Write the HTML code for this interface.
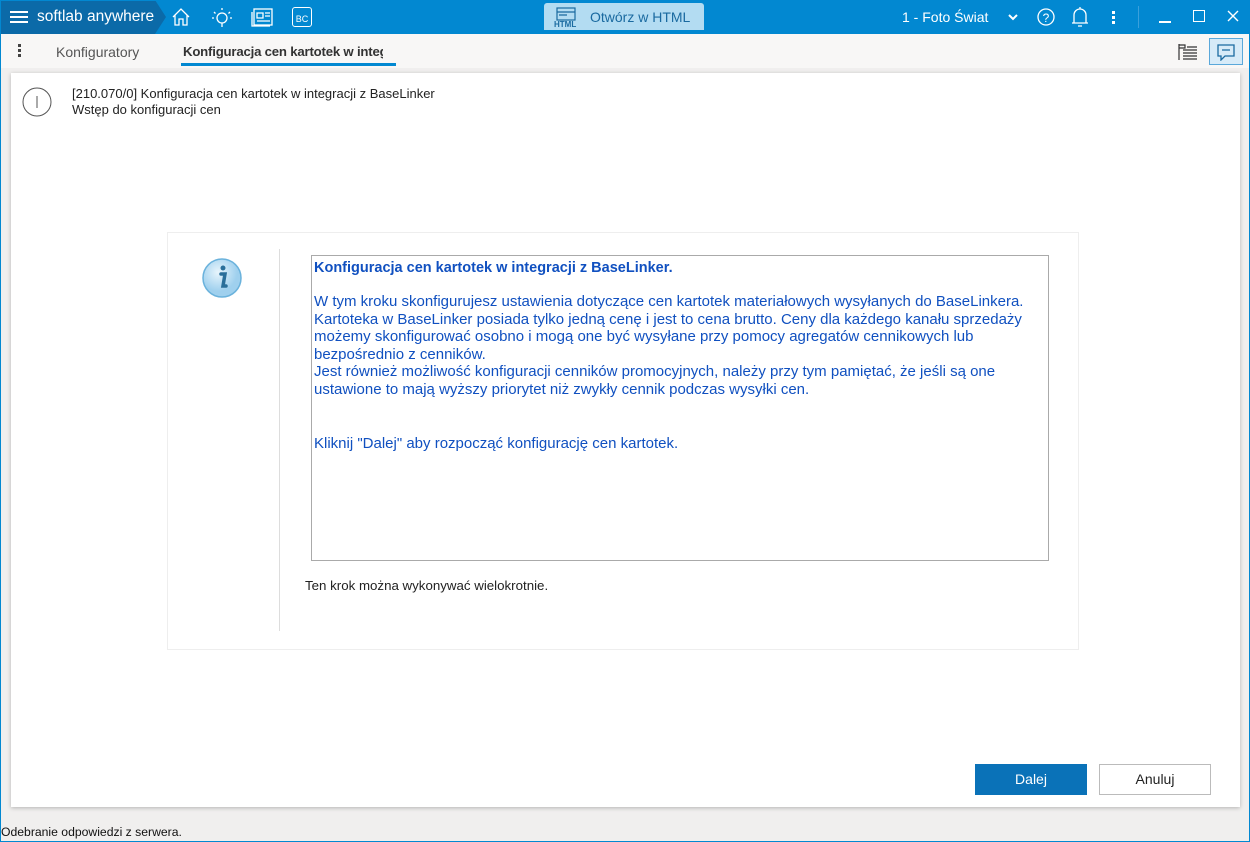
<!DOCTYPE html>
<html><head><meta charset="utf-8"><style>
*{margin:0;padding:0;box-sizing:border-box}
body{width:1250px;height:842px;overflow:hidden;background:#f0efee;font-family:"Liberation Sans",sans-serif;position:relative}
.frame{position:absolute;left:0;top:0;width:1250px;height:842px;border:1px solid #0288d1;pointer-events:none}
.top{position:absolute;left:0;top:0;width:1250px;height:34px;background:#0288d1}
.brand{position:absolute;left:0;top:0;width:166px;height:34px;background:#0b6aa8;clip-path:polygon(0 0,155px 0,166px 17px,155px 34px,0 34px)}
.abs{position:absolute}
.w{color:#fff}
.tabs{position:absolute;left:0;top:34px;width:1250px;height:34px;background:#f8f7f6}
.panel{position:absolute;left:11px;top:73px;width:1229px;height:734px;background:#fff;box-shadow:0 1px 4px rgba(0,0,0,.25)}
.blue{color:#1050c0;font-family:"Liberation Sans",sans-serif;font-size:15px;position:absolute;left:314px;white-space:nowrap}
.btn{position:absolute;top:764px;width:112px;height:31px;font-size:14px;text-align:center;line-height:31px}
</style></head><body>
<div class="top"></div>
<div class="brand"></div>
<div class="abs" style="left:10px;top:11px;width:18px;height:2px;background:#fff;box-shadow:0 5px 0 #fff,0 10px 0 #fff"></div>
<div class="abs w" style="left:37px;top:8px;font-size:15.5px">softlab anywhere</div>
<svg class="abs" style="left:171px;top:7px" width="20" height="20" viewBox="0 0 20 20" fill="none" stroke="#fff" stroke-width="1.3"><path d="M2 10L10 2l8 8M4 8v10h4v-6h4v6h4V8"/></svg>
<svg class="abs" style="left:210px;top:5px" width="24" height="24" viewBox="0 0 24 24" fill="none" stroke="#fff" stroke-width="1.3"><circle cx="12" cy="13" r="5"/><path d="M12 18v4M12 3v2M4 7l1.5 1.5M20 7l-1.5 1.5M2 13h2M20 13h2"/></svg>
<svg class="abs" style="left:251px;top:7px" width="22" height="20" viewBox="0 0 22 20" fill="none" stroke="#fff" stroke-width="1.3"><rect x="3" y="2" width="18" height="16"/><path d="M1 5v14h18M6 6h6v5H6zM14 6h5M14 9h5M6 14h13"/></svg>
<div class="abs" style="left:292px;top:7px;width:20px;height:20px;border:1.3px solid #fff;border-radius:3px;color:#fff;font-size:9px;text-align:center;line-height:18px;padding-top:2px">BC</div>
<div class="abs" style="left:544px;top:3px;width:160px;height:27px;background:#b3dcf2;border-radius:3px 3px 0 0"></div>
<svg class="abs" style="left:553px;top:6px" width="26" height="24" viewBox="0 0 26 24" fill="none" stroke="#1a6aa0" stroke-width="1.2"><rect x="4" y="2" width="18" height="12"/><path d="M4 6h18M6 9h8"/></svg>
<div class="abs" style="left:554px;top:20px;font-size:8px;font-weight:bold;color:#1a6aa0">HTML</div>
<div class="abs" style="left:590px;top:9px;font-size:14px;color:#1a6aa0">Otwórz w HTML</div>
<div class="abs w" style="left:902px;top:9px;font-size:14px">1 - Foto Świat</div>
<svg class="abs" style="left:1007px;top:13px" width="12" height="8"><path d="M2 2l4 4 4-4" stroke="#fff" stroke-width="2" fill="none"/></svg>
<svg class="abs" style="left:1036px;top:7px" width="20" height="20"><circle cx="10" cy="10" r="8" stroke="#fff" stroke-width="1.3" fill="none"/><text x="10" y="15" fill="#fff" font-size="12" text-anchor="middle" font-family="Liberation Sans">?</text></svg>
<svg class="abs" style="left:1070px;top:6px" width="20" height="22" viewBox="0 0 20 22" fill="none" stroke="#fff" stroke-width="1.3"><path d="M4 17V9a6 6 0 0112 0v8M2 17h16M8 20h4M10 3V1"/></svg>
<div class="abs" style="left:1112px;top:11px;width:3px;height:3px;background:#fff;box-shadow:0 5px 0 #fff,0 10px 0 #fff"></div>
<div class="abs" style="left:1138px;top:6px;width:1px;height:22px;background:#3aa0dc"></div>
<div class="abs" style="left:1159px;top:21px;width:12px;height:1.5px;background:#fff"></div>
<div class="abs" style="left:1193px;top:10px;width:12px;height:12px;border:1.5px solid #fff"></div>
<svg class="abs" style="left:1227px;top:10px" width="12" height="12"><path d="M1 1l10 10M11 1L1 11" stroke="#fff" stroke-width="1.4"/></svg>

<div class="tabs"></div>
<div class="abs" style="left:18px;top:44px;width:3px;height:3px;background:#444;box-shadow:0 5px 0 #444,0 10px 0 #444"></div>
<div class="abs" style="left:56px;top:44px;font-size:14px;color:#555">Konfiguratory</div>
<div class="abs" style="left:183px;top:44px;font-size:13.2px;font-weight:bold;color:#333;width:200px;overflow:hidden;white-space:nowrap;letter-spacing:-0.2px">Konfiguracja cen kartotek w integracji</div>
<div class="abs" style="left:181px;top:63px;width:215px;height:3px;background:#0288d1"></div>
<svg class="abs" style="left:1177px;top:42px" width="22" height="20" fill="none" stroke="#333" stroke-width="1.2"><path d="M2 2v16M2 3h6v3H2M6 8h14M6 11h14M6 14h14M6 17h14M10 5h10"/></svg>
<div class="abs" style="left:1209px;top:38px;width:34px;height:27px;background:#d7ebf8;border:1px solid #5aa8da"></div>
<svg class="abs" style="left:1216px;top:43px" width="20" height="18" fill="none" stroke="#1a6aa0" stroke-width="1.3"><path d="M2 2h16v11H9l-4 4v-4H2z M6 7h8"/></svg>

<div class="panel"></div>
<svg class="abs" style="left:22px;top:87px" width="30" height="30"><circle cx="15" cy="15" r="14" stroke="#555" stroke-width="1" fill="none"/><path d="M15 9v12" stroke="#555"/></svg>
<div class="abs" style="left:72px;top:86px;font-size:13px;color:#222;line-height:16px">[210.070/0] Konfiguracja cen kartotek w integracji z BaseLinker<br>Wstęp do konfiguracji cen</div>

<div class="abs" style="left:167px;top:232px;width:912px;height:418px;border:1px solid #eee;background:#fff"></div>
<div class="abs" style="left:279px;top:249px;width:1px;height:382px;background:#ddd"></div>
<svg class="abs" style="left:200px;top:256px" width="44" height="44"><defs><radialGradient id="g" cx="40%" cy="35%"><stop offset="0" stop-color="#e8f5fc"/><stop offset="1" stop-color="#9fd0ee"/></radialGradient></defs><circle cx="22" cy="22" r="19" fill="url(#g)" stroke="#6ab2dc" stroke-width="1.5"/><circle cx="23" cy="12" r="2.5" fill="#2a6f9a"/><path d="M21 18h4l-2 12h3" stroke="#2a6f9a" stroke-width="3.5" fill="none" stroke-linecap="round"/></svg>
<div class="abs" style="left:311px;top:255px;width:738px;height:306px;border:1px solid #aaa;background:#fff"></div>
<div class="blue" style="top:260px;font-weight:bold;font-size:14.5px">Konfiguracja cen kartotek w integracji z BaseLinker.</div>
<div class="blue" style="top:293px;line-height:17.5px">W tym kroku skonfigurujesz ustawienia dotyczące cen kartotek materiałowych wysyłanych do BaseLinkera.<br>Kartoteka w BaseLinker posiada tylko jedną cenę i jest to cena brutto. Ceny dla każdego kanału sprzedaży<br>możemy skonfigurować osobno i mogą one być wysyłane przy pomocy agregatów cennikowych lub<br>bezpośrednio z cenników.<br>Jest również możliwość konfiguracji cenników promocyjnych, należy przy tym pamiętać, że jeśli są one<br>ustawione to mają wyższy priorytet niż zwykły cennik podczas wysyłki cen.</div>
<div class="blue" style="top:435px">Kliknij "Dalej" aby rozpocząć konfigurację cen kartotek.</div>
<div class="abs" style="left:305px;top:578px;font-size:13.3px;color:#222">Ten krok można wykonywać wielokrotnie.</div>

<div class="btn" style="left:975px;background:#0a72b8;color:#fff">Dalej</div>
<div class="btn" style="left:1099px;background:#fff;border:1px solid #bbb;color:#222;line-height:29px">Anuluj</div>
<div class="abs" style="left:1px;top:825px;font-size:12.2px;color:#111">Odebranie odpowiedzi z serwera.</div>
<div class="frame"></div>
</body></html>
